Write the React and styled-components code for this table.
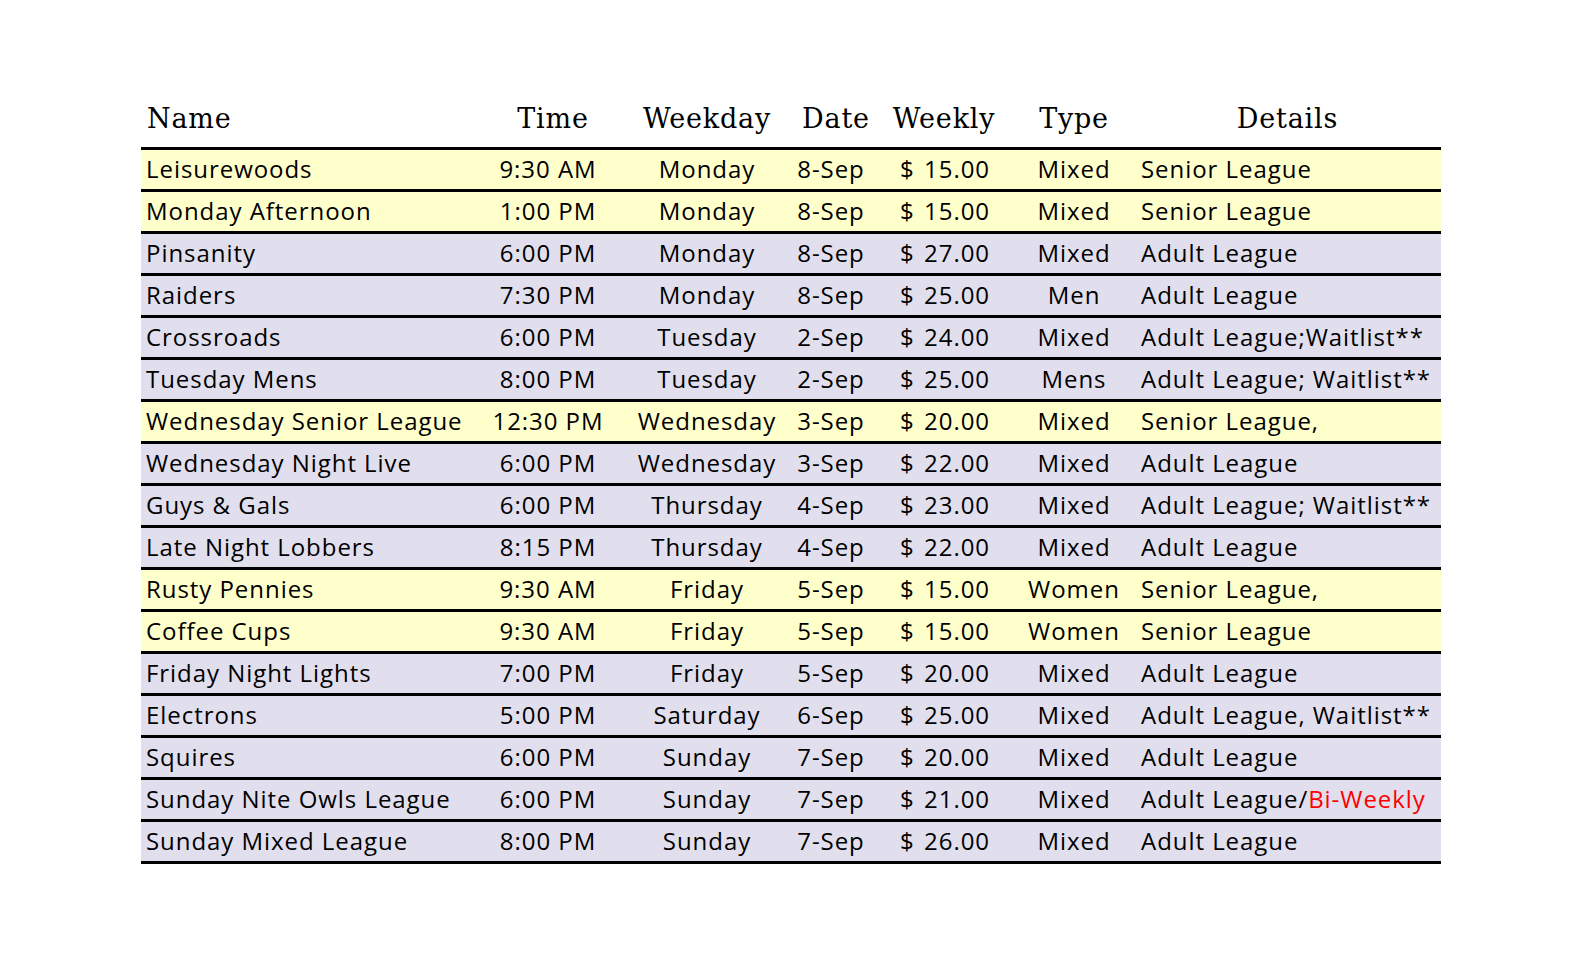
import React from "react";
import styled, { createGlobalStyle } from "styled-components";

const Global = createGlobalStyle`
  html, body { margin: 0; padding: 0; background: #ffffff; }
  body { width: 1582px; height: 977px; overflow: hidden; }
`;

const Page = styled.div`
  padding: 94px 0 0 141px;
`;

const Table = styled.div`
  width: 1300px;
  display: grid;
  grid-template-columns: 329px 156px 162px 86px 140px 120px 307px;
`;

const HeadCell = styled.div`
  height: 56px;
  box-sizing: border-box;
  border-bottom: 3px solid #000;
  padding-bottom: 4px;
  display: flex;
  align-items: center;
  justify-content: ${(p) => (p.$left ? "flex-start" : "center")};
  padding-left: ${(p) => p.$pl || 0}px;
  font-family: "DejaVu Serif", "Liberation Serif", serif;
  font-size: 27px;
  letter-spacing: 0.8px;
  color: #000;
`;

const Cell = styled.div`
  height: 42px;
  box-sizing: border-box;
  border-bottom: 3px solid #000;
  background: ${(p) => (p.$senior ? "#ffffcc" : "#e1dfed")};
  display: flex;
  align-items: center;
  justify-content: ${(p) => p.$justify || "center"};
  padding: 0 ${(p) => p.$pr || 0}px 2px ${(p) => p.$pl || 0}px;
  font-family: "Open Sans", Lato, "Liberation Sans", sans-serif;
  font-size: 24px;
  letter-spacing: 0.95px;
  color: #000;
  white-space: nowrap;
`;

const Red = styled.span`
  color: #ff0000;
`;

const rows = [
  ["Leisurewoods", "9:30 AM", "Monday", "8-Sep", "15.00", "Mixed", "Senior League", true],
  ["Monday Afternoon", "1:00 PM", "Monday", "8-Sep", "15.00", "Mixed", "Senior League", true],
  ["Pinsanity", "6:00 PM", "Monday", "8-Sep", "27.00", "Mixed", "Adult League", false],
  ["Raiders", "7:30 PM", "Monday", "8-Sep", "25.00", "Men", "Adult League", false],
  ["Crossroads", "6:00 PM", "Tuesday", "2-Sep", "24.00", "Mixed", "Adult League;Waitlist**", false],
  ["Tuesday Mens", "8:00 PM", "Tuesday", "2-Sep", "25.00", "Mens", "Adult League; Waitlist**", false],
  ["Wednesday Senior League", "12:30 PM", "Wednesday", "3-Sep", "20.00", "Mixed", "Senior League,", true],
  ["Wednesday Night Live", "6:00 PM", "Wednesday", "3-Sep", "22.00", "Mixed", "Adult League", false],
  ["Guys & Gals", "6:00 PM", "Thursday", "4-Sep", "23.00", "Mixed", "Adult League; Waitlist**", false],
  ["Late Night Lobbers", "8:15 PM", "Thursday", "4-Sep", "22.00", "Mixed", "Adult League", false],
  ["Rusty Pennies", "9:30 AM", "Friday", "5-Sep", "15.00", "Women", "Senior League,", true],
  ["Coffee Cups", "9:30 AM", "Friday", "5-Sep", "15.00", "Women", "Senior League", true],
  ["Friday Night Lights", "7:00 PM", "Friday", "5-Sep", "20.00", "Mixed", "Adult League", false],
  ["Electrons", "5:00 PM", "Saturday", "6-Sep", "25.00", "Mixed", "Adult League, Waitlist**", false],
  ["Squires", "6:00 PM", "Sunday", "7-Sep", "20.00", "Mixed", "Adult League", false],
  ["Sunday Nite Owls League", "6:00 PM", "Sunday", "7-Sep", "21.00", "Mixed", "BIWEEKLY", false],
  ["Sunday Mixed League", "8:00 PM", "Sunday", "7-Sep", "26.00", "Mixed", "Adult League", false],
];

export default function App() {
  return (
    <Page>
      <Global />
      <Table>
        <HeadCell $left $pl={6}>Name</HeadCell>
        <HeadCell $pl={10}>Time</HeadCell>
        <HeadCell>Weekday</HeadCell>
        <HeadCell $pl={10}>Date</HeadCell>
        <HeadCell>Weekly</HeadCell>
        <HeadCell>Type</HeadCell>
        <HeadCell>Details</HeadCell>
        {rows.map((r, i) => {
          const s = r[7];
          return (
            <React.Fragment key={i}>
              <Cell $senior={s} $justify="flex-start" $pl={5}>{r[0]}</Cell>
              <Cell $senior={s}>{r[1]}</Cell>
              <Cell $senior={s}>{r[2]}</Cell>
              <Cell $senior={s}>{r[3]}</Cell>
              <Cell $senior={s} $justify="space-between" $pl={26} $pr={24}>
                <span>$</span>
                <span>{r[4]}</span>
              </Cell>
              <Cell $senior={s}>{r[5]}</Cell>
              <Cell $senior={s} $justify="flex-start" $pl={7}>
                {r[6] === "BIWEEKLY" ? (
                  <>Adult League/<Red>Bi-Weekly</Red></>
                ) : (
                  r[6]
                )}
              </Cell>
            </React.Fragment>
          );
        })}
      </Table>
    </Page>
  );
}
